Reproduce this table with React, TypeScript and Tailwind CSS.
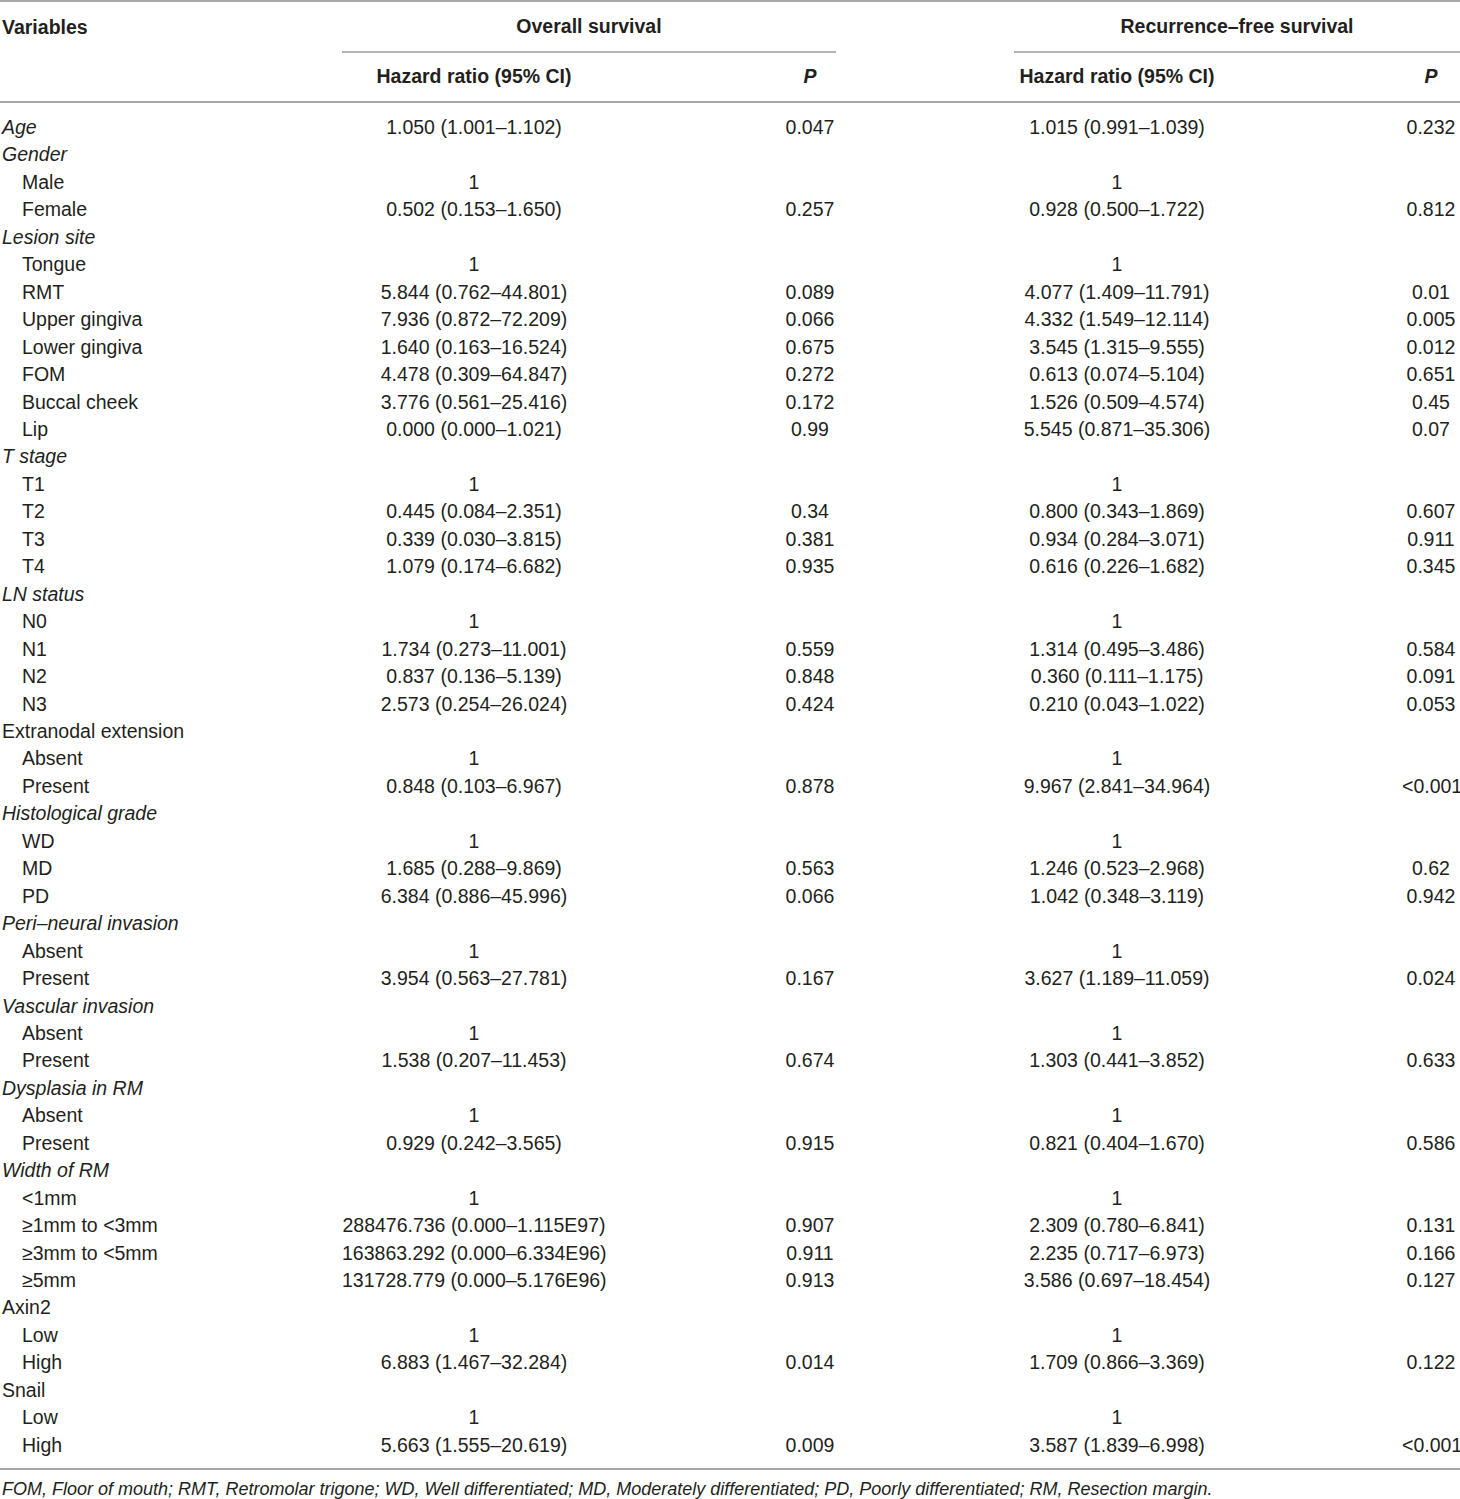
import React from "react";

type Row = {
    label: string;
    sub?: boolean;
    italic?: boolean;
    osHr?: string;
    osP?: string;
    rfsHr?: string;
    rfsP?: string;
};

const rows: Row[] = [
    { label: "Age", italic: true, osHr: "1.050 (1.001–1.102)", osP: "0.047", rfsHr: "1.015 (0.991–1.039)", rfsP: "0.232" },
    { label: "Gender", italic: true },
    { label: "Male", sub: true, osHr: "1", rfsHr: "1" },
    { label: "Female", sub: true, osHr: "0.502 (0.153–1.650)", osP: "0.257", rfsHr: "0.928 (0.500–1.722)", rfsP: "0.812" },
    { label: "Lesion site", italic: true },
    { label: "Tongue", sub: true, osHr: "1", rfsHr: "1" },
    { label: "RMT", sub: true, osHr: "5.844 (0.762–44.801)", osP: "0.089", rfsHr: "4.077 (1.409–11.791)", rfsP: "0.01" },
    { label: "Upper gingiva", sub: true, osHr: "7.936 (0.872–72.209)", osP: "0.066", rfsHr: "4.332 (1.549–12.114)", rfsP: "0.005" },
    { label: "Lower gingiva", sub: true, osHr: "1.640 (0.163–16.524)", osP: "0.675", rfsHr: "3.545 (1.315–9.555)", rfsP: "0.012" },
    { label: "FOM", sub: true, osHr: "4.478 (0.309–64.847)", osP: "0.272", rfsHr: "0.613 (0.074–5.104)", rfsP: "0.651" },
    { label: "Buccal cheek", sub: true, osHr: "3.776 (0.561–25.416)", osP: "0.172", rfsHr: "1.526 (0.509–4.574)", rfsP: "0.45" },
    { label: "Lip", sub: true, osHr: "0.000 (0.000–1.021)", osP: "0.99", rfsHr: "5.545 (0.871–35.306)", rfsP: "0.07" },
    { label: "T stage", italic: true },
    { label: "T1", sub: true, osHr: "1", rfsHr: "1" },
    { label: "T2", sub: true, osHr: "0.445 (0.084–2.351)", osP: "0.34", rfsHr: "0.800 (0.343–1.869)", rfsP: "0.607" },
    { label: "T3", sub: true, osHr: "0.339 (0.030–3.815)", osP: "0.381", rfsHr: "0.934 (0.284–3.071)", rfsP: "0.911" },
    { label: "T4", sub: true, osHr: "1.079 (0.174–6.682)", osP: "0.935", rfsHr: "0.616 (0.226–1.682)", rfsP: "0.345" },
    { label: "LN status", italic: true },
    { label: "N0", sub: true, osHr: "1", rfsHr: "1" },
    { label: "N1", sub: true, osHr: "1.734 (0.273–11.001)", osP: "0.559", rfsHr: "1.314 (0.495–3.486)", rfsP: "0.584" },
    { label: "N2", sub: true, osHr: "0.837 (0.136–5.139)", osP: "0.848", rfsHr: "0.360 (0.111–1.175)", rfsP: "0.091" },
    { label: "N3", sub: true, osHr: "2.573 (0.254–26.024)", osP: "0.424", rfsHr: "0.210 (0.043–1.022)", rfsP: "0.053" },
    { label: "Extranodal extension" },
    { label: "Absent", sub: true, osHr: "1", rfsHr: "1" },
    { label: "Present", sub: true, osHr: "0.848 (0.103–6.967)", osP: "0.878", rfsHr: "9.967 (2.841–34.964)", rfsP: "<0.001" },
    { label: "Histological grade", italic: true },
    { label: "WD", sub: true, osHr: "1", rfsHr: "1" },
    { label: "MD", sub: true, osHr: "1.685 (0.288–9.869)", osP: "0.563", rfsHr: "1.246 (0.523–2.968)", rfsP: "0.62" },
    { label: "PD", sub: true, osHr: "6.384 (0.886–45.996)", osP: "0.066", rfsHr: "1.042 (0.348–3.119)", rfsP: "0.942" },
    { label: "Peri–neural invasion", italic: true },
    { label: "Absent", sub: true, osHr: "1", rfsHr: "1" },
    { label: "Present", sub: true, osHr: "3.954 (0.563–27.781)", osP: "0.167", rfsHr: "3.627 (1.189–11.059)", rfsP: "0.024" },
    { label: "Vascular invasion", italic: true },
    { label: "Absent", sub: true, osHr: "1", rfsHr: "1" },
    { label: "Present", sub: true, osHr: "1.538 (0.207–11.453)", osP: "0.674", rfsHr: "1.303 (0.441–3.852)", rfsP: "0.633" },
    { label: "Dysplasia in RM", italic: true },
    { label: "Absent", sub: true, osHr: "1", rfsHr: "1" },
    { label: "Present", sub: true, osHr: "0.929 (0.242–3.565)", osP: "0.915", rfsHr: "0.821 (0.404–1.670)", rfsP: "0.586" },
    { label: "Width of RM", italic: true },
    { label: "<1mm", sub: true, osHr: "1", rfsHr: "1" },
    { label: "≥1mm to <3mm", sub: true, osHr: "288476.736 (0.000–1.115E97)", osP: "0.907", rfsHr: "2.309 (0.780–6.841)", rfsP: "0.131" },
    { label: "≥3mm to <5mm", sub: true, osHr: "163863.292 (0.000–6.334E96)", osP: "0.911", rfsHr: "2.235 (0.717–6.973)", rfsP: "0.166" },
    { label: "≥5mm", sub: true, osHr: "131728.779 (0.000–5.176E96)", osP: "0.913", rfsHr: "3.586 (0.697–18.454)", rfsP: "0.127" },
    { label: "Axin2" },
    { label: "Low", sub: true, osHr: "1", rfsHr: "1" },
    { label: "High", sub: true, osHr: "6.883 (1.467–32.284)", osP: "0.014", rfsHr: "1.709 (0.866–3.369)", rfsP: "0.122" },
    { label: "Snail" },
    { label: "Low", sub: true, osHr: "1", rfsHr: "1" },
    { label: "High", sub: true, osHr: "5.663 (1.555–20.619)", osP: "0.009", rfsHr: "3.587 (1.839–6.998)", rfsP: "<0.001" },
];

const cols = "grid grid-cols-[342px_264px_178px_52px_178px_206px_182px_58px]";

export default function App() {
    return (
        <div className="w-[1460px] bg-white text-[#231f20] text-[19.5px] font-['Liberation_Sans',Arial,sans-serif]">
            <div className="border-t-2 border-[#a7a7a7]">
                <div className={`${cols} h-[51px] items-center`}>
                    <div className="pl-[2px] font-bold">Variables</div>
                    <div className="col-span-3 flex flex-col self-stretch">
                        <div className="flex-1 flex items-center justify-center font-bold">Overall survival</div>
                        <div className="h-[2px] bg-[#b3b3b3]" />
                    </div>
                    <div />
                    <div className="col-span-3 flex flex-col self-stretch">
                        <div className="flex-1 flex items-center justify-center font-bold">Recurrence–free survival</div>
                        <div className="h-[2px] bg-[#b3b3b3]" />
                    </div>
                </div>
                <div className={`${cols} h-[50px] items-center font-bold border-b-2 border-[#a7a7a7]`}>
                    <div />
                    <div className="text-center">Hazard ratio (95% CI)</div>
                    <div />
                    <div className="text-center italic">P</div>
                    <div />
                    <div className="text-center">Hazard ratio (95% CI)</div>
                    <div />
                    <div className="text-center italic">P</div>
                </div>
            </div>

            <div className="pt-[10px] pb-[10px] border-b-2 border-[#a7a7a7]">
                {rows.map((r, i) => (
                    <div key={i} className={`${cols} h-[27.46px] items-center whitespace-nowrap`}>
                        <div className={`${r.sub ? "pl-[22px]" : "pl-[2px]"} ${r.italic ? "italic" : ""}`}>{r.label}</div>
                        <div className="text-center">{r.osHr}</div>
                        <div />
                        <div className="text-center">{r.osP}</div>
                        <div />
                        <div className="text-center">{r.rfsHr}</div>
                        <div />
                        <div className="text-center">{r.rfsP}</div>
                    </div>
                ))}
            </div>

            <div className="h-[38px] flex items-center pl-[2px] italic text-[18px] whitespace-nowrap">
                FOM, Floor of mouth; RMT, Retromolar trigone; WD, Well differentiated; MD, Moderately differentiated; PD, Poorly differentiated; RM, Resection margin.
            </div>
        </div>
    );
}
